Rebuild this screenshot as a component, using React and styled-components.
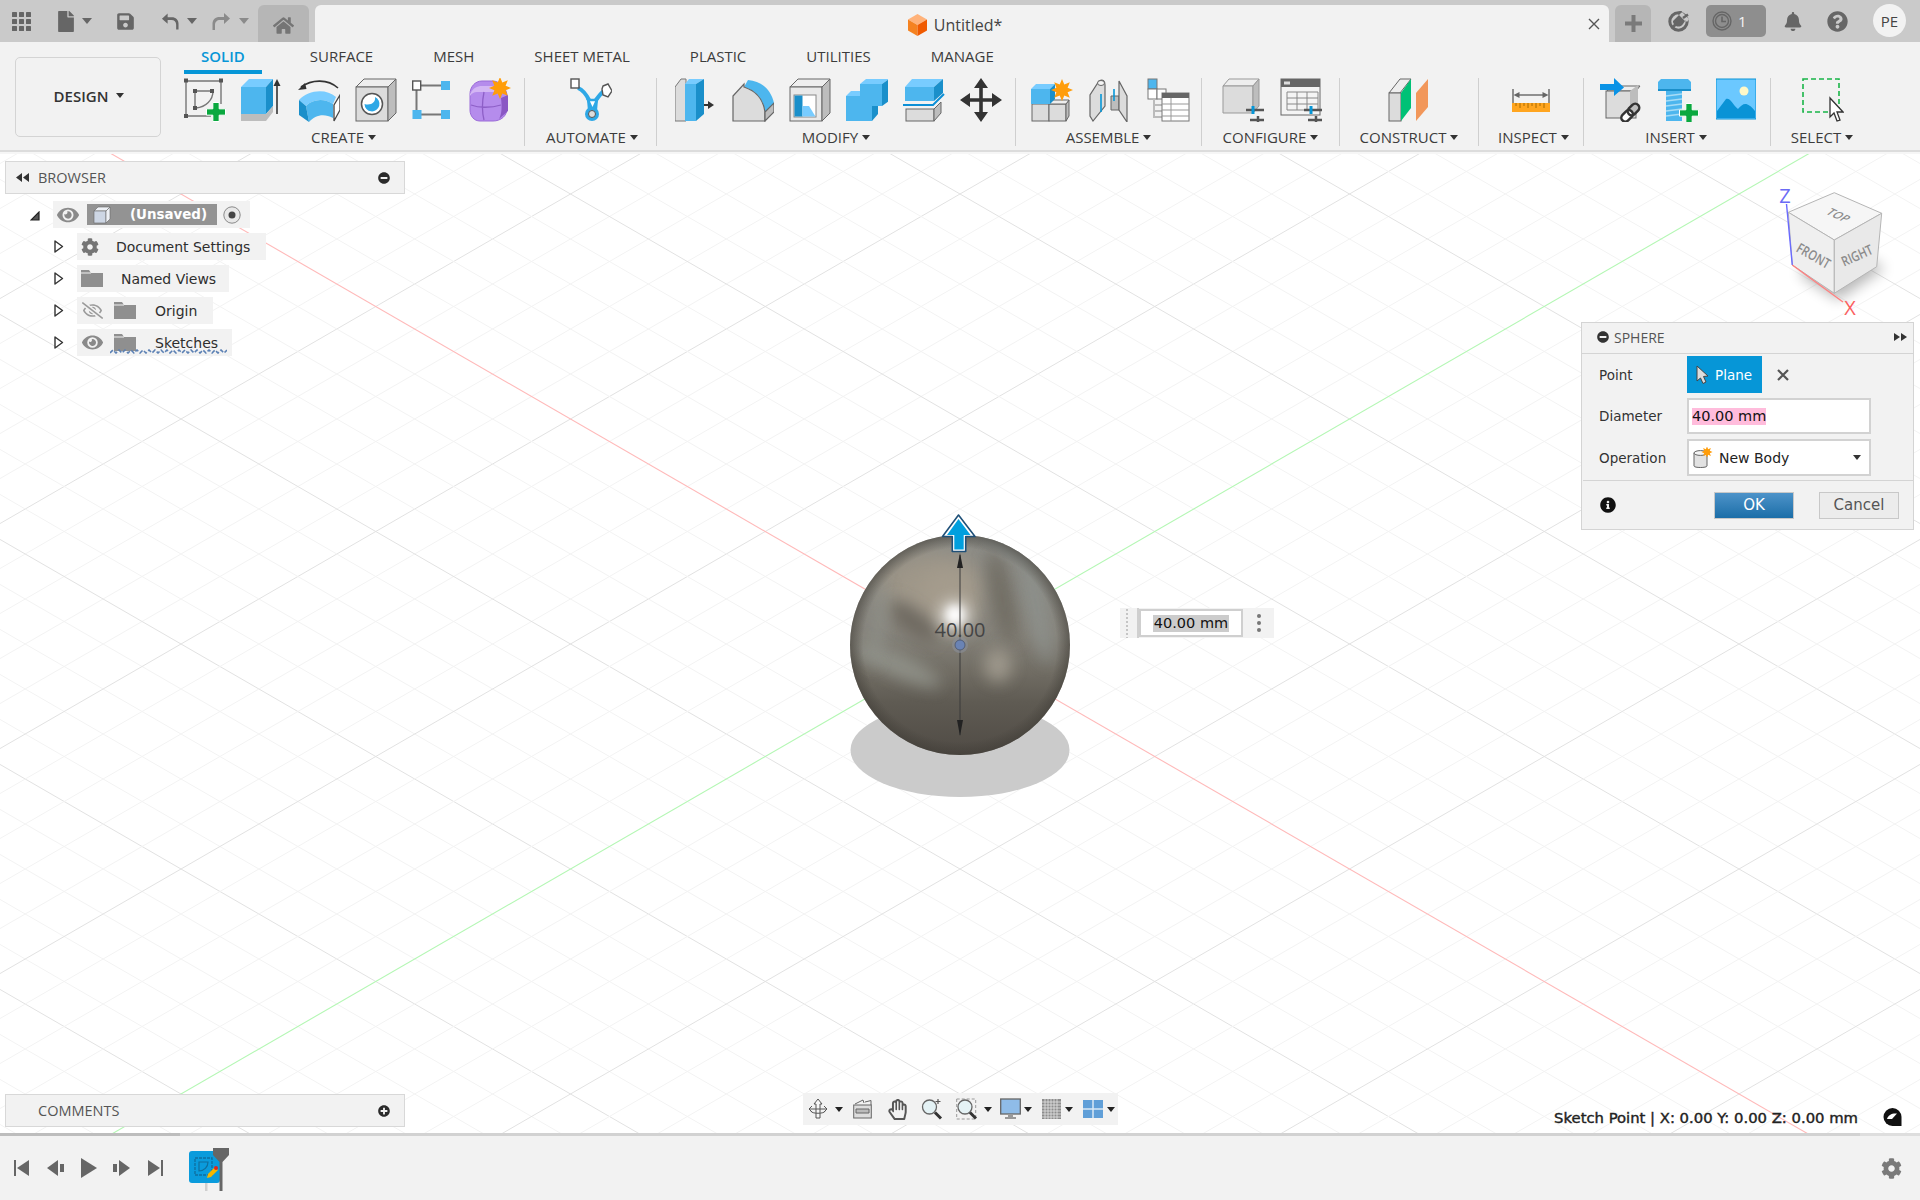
import React from "react";
import styled, { createGlobalStyle } from "styled-components";
import { FaBell, FaCog, FaEye, FaFile, FaHome, FaInfoCircle, FaMinusCircle, FaPlusCircle, FaQuestionCircle, FaRegEyeSlash, FaRegHandPaper, FaSave } from "react-icons/fa";

const Global = createGlobalStyle`
  html, body { margin: 0; padding: 0; background: #fff; }
  * { box-sizing: border-box; }
  body { font-family: "Open Sans", "Noto Sans", sans-serif; }
`;

const Page = styled.div`
  width: 1920px; height: 1200px; display: flex; flex-direction: column; overflow: hidden; color: #333;
`;

/* ---------- title bar ---------- */
const TitleBar = styled.header`
  height: 42px; flex: none; background: #cacaca; padding-top: 5px; display: flex; align-items: stretch; color: #666;
`;
const TopItem = styled.span`
  flex: none; margin-left: ${p => p.$ml || 0}px; width: ${p => p.$w}px; height: 32px; display: flex; align-items: center; justify-content: center; color: ${p => p.$c || "#666"};
`;
const Caret = styled.span`
  flex: none; display: inline-block; width: 0; height: 0;
  border-left: ${p => p.$s || 4}px solid transparent; border-right: ${p => p.$s || 4}px solid transparent;
  border-top: ${p => (p.$s || 4) * 1.25}px solid ${p => p.$c || "#444"};
  margin-left: ${p => p.$ml || 0}px;
`;
const HomeTab = styled.div`
  flex: none; margin-left: 9px; width: 51px; background: #b6b6b6; border-radius: 6px 6px 0 0; display: flex; align-items: center; justify-content: center; padding-top: 4px; color: #757575;
`;
const DocTab = styled.div`
  flex: none; margin-left: 6px; width: 1294px; background: #f2f2f2; border-radius: 6px 6px 0 0; display: flex; align-items: center; padding-right: 9px;
`;
const DocTitle = styled.div`
  flex: 1; display: flex; align-items: center; justify-content: center; gap: 7px; padding: 2px 0 0 7px; font-size: 16px; color: #444;
`;
const PlusTab = styled(HomeTab)`
  margin-left: 6px; width: 36px; padding-top: 0; color: #777;
`;
const ClockPill = styled.div`
  flex: none; margin-left: 17px; width: 60px; background: #8e8e8e; border-radius: 5px; height: 32px; display: flex; align-items: center; padding-left: 6px; gap: 6px; color: #f4f4f4; font-size: 15px;
`;
const Avatar = styled.div`
  flex: none; margin-left: 25px; margin-top: -1px; width: 33px; height: 33px; border-radius: 50%; background: #f2f2f2; display: flex; align-items: center; justify-content: center; font-size: 15px; color: #444;
`;

/* ---------- ribbon ---------- */
const Ribbon = styled.section`
  height: 110px; flex: none; background: #f2f2f2; border-bottom: 2px solid #dcdcdc; display: flex; align-items: flex-start;
`;
const DesignButton = styled.div`
  flex: none; margin: 15px 0 0 15px; width: 146px; height: 80px; padding: 0 0 3px 2px; border: 1.5px solid #d4d4d4; border-radius: 5px; display: flex; align-items: center; justify-content: center; gap: 8px; font-size: 15px; font-weight: 600; color: #333;
`;
const RibbonMain = styled.div`
  margin-left: 9px; display: flex; flex-direction: column;
`;
const Tabs = styled.nav`
  height: 36px; display: flex; gap: 26px; padding-left: 14px;
`;
const Tab = styled.div`
  height: 32px; padding: 5px 17px 0; font-size: 15px; line-height: 18px; white-space: nowrap; margin-right: ${p => (p.$active ? 5 : 0)}px;
  color: ${p => (p.$active ? "#0696d7" : "#3c3c3c")}; font-weight: ${p => (p.$active ? 600 : 400)};
  border-bottom: 4px solid ${p => (p.$active ? "#0696d7" : "transparent")};
`;
const Groups = styled.div`
  display: flex;
`;
const Group = styled.div`
  flex: none; width: ${p => p.$w}px; height: 68px; display: flex; flex-direction: column; align-items: center;
  border-right: ${p => (p.$last ? "none" : "1.5px solid #cfcfcf")};
`;
const ToolRow = styled.div`
  height: 44px; display: flex; gap: ${p => p.$gap ?? 15}px; padding-left: ${p => p.$pl || 0}px;
`;
const GroupLabel = styled.div`
  margin-top: 6px; height: 18px; line-height: 18px; display: flex; align-items: center; gap: 4px; font-size: 15px; color: #3c3c3c; white-space: nowrap; margin-right: ${p => p.$lo || 0}px;
`;
const ToolSvg = styled.svg`
  flex: none; display: block; width: ${p => p.$w || 42}px; height: 44px;
`;

const B = { front: "#4db6ee", dark: "#1a8fca", light: "#78ccff", line: "#666", g1: "#dcdcdc", g2: "#bdbdbd", g3: "#eeeeee" };
const Tool = ({ w = 42, children }) => <ToolSvg $w={w} viewBox={`0 0 ${w} 44`}>{children}</ToolSvg>;
const Plus = ({ x, y, s = 18 }) => (
  <g transform={`translate(${x} ${y})`}>
    <path d={`M${-s / 6} ${-s / 2}h${s / 3}v${s / 3}h${s / 3}v${s / 3}h${-s / 3}v${s / 3}h${-s / 3}v${-s / 3}h${-s / 3}v${-s / 3}h${s / 3}z`} fill="#0aa83f" stroke="#fff" strokeWidth="1" />
  </g>
);
const Star = ({ x, y, r = 10 }) => {
  const pts = [];
  for (let i = 0; i < 16; i++) {
    const a = (i * Math.PI) / 8 - Math.PI / 2;
    const R = i % 2 ? r * 0.55 : r;
    pts.push(`${(x + R * Math.cos(a)).toFixed(1)},${(y + R * Math.sin(a)).toFixed(1)}`);
  }
  return <polygon points={pts.join(" ")} fill="#ff9d0a" />;
};
const Sliders = ({ x, y }) => (
  <g transform={`translate(${x} ${y})`} stroke="#555" strokeWidth="2.5">
    <path d="M0 3h18M4 13h14" />
    <path d="M7 -1v8" stroke="#0696d7" strokeWidth="3" />
    <path d="M12 9v8" />
  </g>
);

const SketchIcon = () => (
  <Tool>
    <g stroke="#777" strokeWidth="1.4" fill="none">
      <path d="M3 3h33M2 4v33M3 38h24M37 4v22" />
      <path d="M12 13h16M11 13v17" />
      <path d="M29 13c0 9-7 16-17 17" />
    </g>
    <g fill="#555">
      <rect x="0" y="0.5" width="4" height="4" /><rect x="35" y="0.5" width="4" height="4" /><rect x="0" y="36" width="4" height="4" />
      <rect x="9" y="11" width="4" height="4" /><rect x="26" y="11" width="4" height="4" /><rect x="9" y="28" width="4" height="4" />
    </g>
    <Plus x={32} y={34} s={19} />
  </Tool>
);
const ExtrudeIcon = () => (
  <Tool>
    <path d="M0 9L8 1H32L25 9Z" fill={B.light} />
    <rect x="0" y="9" width="25" height="27" fill={B.front} />
    <path d="M25 9L32 1V28L25 36Z" fill={B.dark} />
    <path d="M0 36H25L32 28V34L25 43H0Z" fill={B.g2} />
    <path d="M36 36V5" stroke="#333" strokeWidth="1.6" />
    <path d="M36 1l3.5 7h-7z" fill="#333" />
  </Tool>
);
const RevolveIcon = () => (
  <Tool>
    <path d="M40 10C30 1 14 1 3 9" fill="none" stroke="#333" strokeWidth="1.6" />
    <path d="M0 12l7-7 1.5 6z" fill="#333" />
    <path d="M1 22C10 12 28 10 38 19L35 26C26 20 15 21 8 28Z" fill={B.light} />
    <path d="M8 28C15 21 26 20 35 26L35 40C26 35 17 37 11 44Z" fill={B.front} />
    <path d="M1 22L8 28L11 44L1 37Z" fill={B.dark} />
    <path d="M36 27L42 17V32L36 43Z" fill="#fff" stroke="#444" strokeWidth="1.3" />
  </Tool>
);
const HoleIcon = () => (
  <Tool>
    <path d="M1 9L9 1H41L33 9Z" fill={B.g3} stroke={B.line} />
    <rect x="1" y="9" width="32" height="34" fill={B.g1} stroke={B.line} />
    <path d="M33 9L41 1V35L33 43Z" fill={B.g2} stroke={B.line} />
    <circle cx="17" cy="26" r="10.5" fill="#fff" stroke="#555" strokeWidth="1.5" />
    <path d="M9.5 26A7.5 7.5 0 1 0 20 19C21 24 16 28 9.5 26Z" fill="#2ea8e6" />
  </Tool>
);
const PatternIcon = () => (
  <Tool w={42}>
    <path d="M9 7.5h20M4.5 12v20M9 36.5h20" stroke="#777" strokeWidth="2" />
    <rect x="0.7" y="3" width="8" height="9" fill="#fff" stroke="#555" strokeWidth="1.4" />
    <rect x="29" y="3" width="9" height="9" fill={B.front} />
    <rect x="0.5" y="32" width="9" height="9" fill={B.front} />
    <rect x="29" y="32" width="9" height="9" fill={B.front} />
  </Tool>
);
const FormIcon = () => (
  <Tool>
    <path d="M1 16C1 9 6 3 13 3H24C30 3 38 10 38 18V30C38 38 32 43 24 43H11C5 43 1 38 1 32Z" fill="#b58cec" stroke="#9a6ad8" />
    <path d="M1 16C4 10 8 8 13 8H24L30 14H8C5 14 3 15 1 18Z" fill="#d3b6f4" />
    <path d="M32 20L39 17V33L30 41C33 36 33 28 32 20Z" fill="#8a58c4" />
    <path d="M2 27C10 30 22 30 32 27M15 14C13 24 13 34 15 42" fill="none" stroke="#8d5fc7" strokeWidth="1.3" />
    <Star x={31} y={10} r={11} />
  </Tool>
);
const AutomateIcon = () => (
  <Tool>
    <path d="M8 10C13 12 16 16 19 22L20 33H25L26 22C29 18 31 15 34 13" fill="none" stroke="#2ea8e6" strokeWidth="4" />
    <path d="M18 22H27L22.5 32Z" fill="#fff" stroke="#2ea8e6" strokeWidth="2.5" />
    <rect x="1" y="1" width="8" height="9" fill="#fff" stroke="#555" strokeWidth="1.4" />
    <path d="M33 8L38 6L42 13L38 19L33 17L32 11Z" fill="#fff" stroke="#555" strokeWidth="1.4" />
    <circle cx="22" cy="36" r="7" fill="#2ea8e6" />
    <circle cx="22" cy="36" r="3.5" fill="#ddd" stroke="#555" />
  </Tool>
);
const PressPullIcon = () => (
  <Tool>
    <path d="M0 9L6 1H11V43H0Z" fill={B.g1} stroke="#777" />
    <path d="M10 6L14 1H29L21 6Z" fill={B.light} />
    <rect x="10" y="6" width="11" height="37" fill={B.front} />
    <path d="M21 6L29 1V36L21 43Z" fill={B.dark} />
    <path d="M29 27H35" stroke="#333" strokeWidth="2" />
    <path d="M39 27l-6-4v8z" fill="#333" />
  </Tool>
);
const FilletIcon = () => (
  <Tool>
    <path d="M16 2C30 3 39 12 42 25L33 34C30 20 24 13 12 9Z" fill={B.front} />
    <path d="M1 18L12 6V9C24 13 31 20 33 34V43H1Z" fill={B.g1} stroke={B.line} strokeWidth="1.2" />
    <path d="M33 34L42 25V34L33 43Z" fill={B.g2} stroke={B.line} strokeWidth="1.2" />
  </Tool>
);
const ShellIcon = () => (
  <Tool>
    <path d="M1 9L9 1H41L33 9Z" fill={B.g3} stroke={B.line} />
    <rect x="1" y="9" width="32" height="34" fill="#e9e9e9" stroke={B.line} />
    <path d="M33 9L41 1V35L33 43Z" fill={B.g2} stroke={B.line} />
    <rect x="5" y="17" width="22" height="22" fill="#fff" stroke="#888" />
    <rect x="5.5" y="17.5" width="8" height="21" fill={B.dark} />
    <path d="M13.5 28H20L26.5 38.5H13.5Z" fill={B.light} />
  </Tool>
);
const CombineIcon = () => (
  <Tool>
    <path d="M0 18L5 13H14V18Z" fill={B.light} />
    <path d="M14 6L20 1H43L36 6Z" fill={B.light} />
    <path d="M0 18H14V6H36V28H26V43H0Z" fill={B.front} />
    <path d="M36 6L43 1V23L36 28Z" fill={B.dark} />
    <path d="M26 28H32V36L26 43Z" fill={B.dark} />
  </Tool>
);
const SplitIcon = () => (
  <Tool>
    <path d="M2 9L9 1H40L31 9Z" fill={B.light} />
    <rect x="2" y="9" width="29" height="14" fill={B.front} />
    <path d="M31 9L40 1V15L31 23Z" fill={B.dark} />
    <path d="M0 27H30L41 16" fill="none" stroke="#0c8fd6" strokeWidth="2" />
    <rect x="3" y="31" width="28" height="12" fill={B.g1} stroke={B.line} />
    <path d="M31 31L38 24V35L31 43Z" fill={B.g2} stroke={B.line} />
  </Tool>
);
const MoveIcon = () => (
  <Tool>
    <path d="M21 6V38M5 22H37" stroke="#333" strokeWidth="3.6" />
    <path d="M21 0l7 10H14zM21 44l7-10H14zM0 22l10-7v14zM42 22l-10-7v14z" fill="#333" />
  </Tool>
);
const JointIcon = () => (
  <Tool>
    <rect x="1" y="26" width="17" height="17" fill={B.g1} stroke={B.line} />
    <rect x="18" y="26" width="17" height="17" fill={B.g1} stroke={B.line} />
    <path d="M35 26L38 22V38L35 43Z" fill={B.g2} stroke={B.line} />
    <path d="M18 26L22 22H38L35 26Z" fill={B.g3} stroke={B.line} />
    <path d="M0 11L5 6H24L19 11Z" fill={B.light} />
    <rect x="0" y="11" width="19" height="15" fill={B.front} />
    <path d="M19 11L24 6V21L19 26Z" fill={B.dark} />
    <Star x={31} y={12} r={11} />
  </Tool>
);
const RigidIcon = () => (
  <Tool w={42}>
    <path d="M1 38V17L10 3C14 1 16 3 16 7V28L4 43Z" fill={B.g1} stroke={B.line} strokeWidth="1.2" />
    <ellipse cx="12" cy="5" rx="3.5" ry="2.5" fill="#f4f4f4" stroke={B.line} />
    <path d="M12 16V34" stroke="#0696d7" strokeWidth="1.6" />
    <path d="M22 18H30V32H22Z" fill={B.g2} stroke={B.line} />
    <path d="M30 3L38 18V44L30 32Z" fill={B.g1} stroke={B.line} strokeWidth="1.2" />
    <path d="M25 11V23" stroke="#0696d7" strokeWidth="1.6" />
  </Tool>
);
const TableTreeIcon = () => (
  <Tool w={43}>
    <rect x="1" y="1" width="9" height="10" fill={B.front} stroke="#777" />
    <rect x="1" y="11" width="9" height="10" fill="#fff" stroke="#777" />
    <rect x="10" y="11" width="9" height="10" fill="#fff" stroke="#777" />
    <path d="M7 21V40M7 27H15M7 33H15M7 39H15" stroke="#bbb" strokeWidth="2" />
    <rect x="15" y="15" width="27" height="28" fill="#fff" stroke="#777" />
    <rect x="15" y="15" width="27" height="5" fill="#666" />
    <path d="M24 20V43M15 26H42M15 32H42M15 38H42" stroke="#999" />
  </Tool>
);
const ConfigIcon = () => (
  <Tool>
    <path d="M1 8L7 1H37L31 8Z" fill={B.g3} stroke="#999" />
    <path d="M1 8H31V35H1Z" fill={B.g1} stroke="#999" />
    <path d="M31 8L37 1V28L31 35Z" fill={B.g2} stroke="#999" />
    <Sliders x={24} y={29} />
  </Tool>
);
const ConfigTableIcon = () => (
  <Tool>
    <rect x="1" y="1" width="39" height="36" fill="#f4f4f4" stroke="#666" />
    <rect x="1" y="1" width="39" height="8" fill="#666" />
    <rect x="4" y="3.5" width="6" height="3" fill="#ddd" />
    <path d="M7 14h31v18H7zM17 14v18M27 14v18M7 20h31M7 26h31" fill="none" stroke="#888" />
    <Sliders x={24} y={29} />
  </Tool>
);
const ConstructIcon = () => (
  <Tool>
    <path d="M1 15L12 1H23L12 15Z" fill={B.g3} stroke="#666" />
    <rect x="1" y="15" width="12" height="28" fill={B.g1} stroke="#666" />
    <path d="M13 43V15L23 1V30Z" fill="#00c176" />
    <path d="M28 43V15L40 1V29Z" fill="#f2975a" />
  </Tool>
);
const InspectIcon = () => (
  <Tool w={38}>
    <path d="M1 11V27M37 11V27" stroke="#666" strokeWidth="1.4" />
    <path d="M6 17H32" stroke="#666" strokeWidth="1.4" />
    <path d="M1.5 17l6-3v6zM36.5 17l-6-3v6z" fill="#666" />
    <rect x="0" y="25" width="38" height="9" fill="#ffa51f" />
    <path d="M4 25v3M8 25v5M12 25v3M16 25v5M20 25v3M24 25v5M28 25v3M32 25v5" stroke="#a86a00" />
  </Tool>
);
const DeriveIcon = () => (
  <Tool>
    <path d="M7 13L11 8H40L36 13Z" fill={B.g3} stroke="#666" />
    <rect x="6" y="13" width="30" height="27" fill={B.g1} stroke="#666" />
    <path d="M30 13L38 7V34L30 40Z" fill={B.g2} />
    <path d="M0 6H14V0L24 9.5L14 18V12H0Z" fill="#0a93e6" />
    <g fill="none" stroke="#333" strokeWidth="2.5" transform="rotate(-45 31 34)">
      <rect x="19" y="30" width="13" height="8" rx="4" fill="#fff" />
      <rect x="28" y="30" width="13" height="8" rx="4" />
    </g>
  </Tool>
);
const BoltIcon = () => (
  <Tool w={42}>
    <path d="M0 4L3 1H30L33 4V13H0Z" fill={B.front} />
    <rect x="0" y="11" width="33" height="2" fill={B.dark} />
    <rect x="8" y="13" width="16" height="30" fill={B.front} />
    <path d="M8 18l16-2M8 23l16-2M8 28l16-2M8 33l16-2M8 38l16-2" stroke="#a7dcf6" strokeWidth="1.4" />
    <Plus x={31} y={35} s={19} />
  </Tool>
);
const ImageIcon = () => (
  <Tool w={40}>
    <rect x="0" y="1" width="40" height="40" fill="#6bc8ff" stroke="#0a93d6" />
    <circle cx="28" cy="13" r="4.5" fill="#fff8c8" />
    <path d="M1 33L10 21C14 19 17 27 22 31C27 25 31 23 39 33V40H1Z" fill="#0a93d6" />
  </Tool>
);
const SelectIcon = () => (
  <Tool>
    <rect x="1" y="1" width="36" height="33" fill="none" stroke="#19b548" strokeWidth="1.6" strokeDasharray="5 3" />
    <path d="M28 20V39L32 35L35 43L38 42L35 34L41 34Z" fill="#fff" stroke="#333" strokeWidth="1.3" />
  </Tool>
);

const groups = [
  { w: 355, label: "CREATE", lo: 7, tools: [SketchIcon, ExtrudeIcon, RevolveIcon, HoleIcon, PatternIcon, FormIcon] },
  { w: 132, label: "AUTOMATE", lo: -3, tools: [AutomateIcon] },
  { w: 359, label: "MODIFY", pl: 4, tools: [PressPullIcon, FilletIcon, ShellIcon, CombineIcon, SplitIcon, MoveIcon] },
  { w: 186, label: "ASSEMBLE", pl: 4, gap: 16, tools: [JointIcon, RigidIcon, TableTreeIcon] },
  { w: 138, label: "CONFIGURE", pl: 3, gap: 16, tools: [ConfigIcon, ConfigTableIcon] },
  { w: 139, label: "CONSTRUCT", tools: [ConstructIcon] },
  { w: 105, label: "INSPECT", lo: -5, tools: [InspectIcon] },
  { w: 187, label: "INSERT", lo: 2, pl: 1, gap: 16, tools: [DeriveIcon, BoltIcon, ImageIcon] },
  { w: 102, label: "SELECT", pl: 1, last: true, tools: [SelectIcon] },
];
const tabs = ["SOLID", "SURFACE", "MESH", "SHEET METAL", "PLASTIC", "UTILITIES", "MANAGE"];

/* ---------- canvas ---------- */
const Canvas = styled.main`
  flex: 1; position: relative; background: #fff; overflow: hidden;
  &::before { content: ""; position: absolute; z-index: 1; left: 0; right: 0; top: 0; height: 2px; background: #f6f6f6; }
`;
const SceneSvg = styled.svg`
  position: absolute; left: 0; top: 0; width: 1920px; height: 981px; display: block;
`;

const EX = 38.95, EY = 22.5, OX = 960, OY = 644, LEN = 2600;
const gridLines = [];
for (let k = -40; k <= 40; k++) {
  const major = k % 5 === 0;
  const stroke = major ? "#e2e2e2" : "#f3f3f3";
  [0, 1].forEach(dir => {
    if (k === 0) return;
    const px = OX + k * EX, py = OY + (dir === 0 ? -1 : 1) * k * EY;
    const dx = LEN, dy = (dir === 0 ? 1 : -1) * LEN * (EY / EX);
    gridLines.push(<line key={`${dir}-${k}`} x1={px - dx} y1={py - dy} x2={px + dx} y2={py + dy} stroke={stroke} strokeWidth="1" />);
  });
}
const axis = (sign, color) => {
  const dy = sign * LEN * (EY / EX);
  return <line x1={OX - LEN} y1={OY - dy} x2={OX + LEN} y2={OY + dy} stroke={color} strokeWidth="1.1" />;
};

const Scene = () => (
  <SceneSvg viewBox="0 152 1920 981">
    <defs>
      <linearGradient id="ballBase" x1="0" y1="0" x2="0" y2="1">
        <stop offset="0" stopColor="#8c8c87" />
        <stop offset="0.45" stopColor="#85827a" />
        <stop offset="0.62" stopColor="#716d64" />
        <stop offset="0.76" stopColor="#5f5b53" />
        <stop offset="1" stopColor="#504b45" />
      </linearGradient>
      <radialGradient id="ballRim" cx="0.5" cy="0.5" r="0.5">
        <stop offset="0.88" stopColor="#3f3c36" stopOpacity="0" />
        <stop offset="1" stopColor="#3f3c36" stopOpacity="0.55" />
      </radialGradient>
      <clipPath id="ballClip"><circle cx="960" cy="645" r="110" /></clipPath>
      <filter id="b4" x="-60%" y="-60%" width="220%" height="220%"><feGaussianBlur stdDeviation="4" /></filter>
      <filter id="b7" x="-80%" y="-80%" width="260%" height="260%"><feGaussianBlur stdDeviation="8" /></filter>
      <filter id="b12" x="-60%" y="-60%" width="220%" height="220%"><feGaussianBlur stdDeviation="12" /></filter>
      <filter id="cubeShadow" x="-40%" y="-40%" width="180%" height="180%"><feGaussianBlur stdDeviation="7" /></filter>
    </defs>
    {gridLines}
    {axis(1, "#ffb9b9")}
    {axis(-1, "#b4f7b4")}
    <ellipse cx="960" cy="750" rx="109.5" ry="47" fill="#cbcbcb" />
    <circle cx="960" cy="645" r="110" fill="url(#ballBase)" />
    <g clipPath="url(#ballClip)">
      <ellipse cx="928" cy="585" rx="50" ry="32" fill="#9e9688" filter="url(#b12)" />
      <ellipse cx="950" cy="597" rx="30" ry="32" fill="#a59c8d" filter="url(#b12)" />
      <ellipse cx="913" cy="622" rx="30" ry="11" fill="#6d685e" transform="rotate(38 913 622)" filter="url(#b7)" />
      <ellipse cx="1002" cy="598" rx="11" ry="48" fill="#6d695f" opacity="0.85" transform="rotate(-12 1002 598)" filter="url(#b7)" />
      <ellipse cx="1036" cy="605" rx="10" ry="60" fill="#8e928d" opacity="0.9" transform="rotate(-12 1036 605)" filter="url(#b7)" />
      <ellipse cx="1000" cy="545" rx="38" ry="6" fill="#8f938f" transform="rotate(30 1000 545)" filter="url(#b4)" />
      <ellipse cx="897" cy="665" rx="48" ry="11" fill="#93948c" opacity="0.9" transform="rotate(24 897 665)" filter="url(#b7)" />
      <ellipse cx="878" cy="625" rx="7" ry="42" fill="#90928b" opacity="0.8" transform="rotate(8 878 625)" filter="url(#b7)" />
      <ellipse cx="998" cy="665" rx="14" ry="17" fill="#a29c90" opacity="0.9" filter="url(#b7)" />
      <ellipse cx="955" cy="616" rx="15" ry="15" fill="#fff" opacity="0.7" filter="url(#b7)" />
      <ellipse cx="955" cy="615" rx="8" ry="9" fill="#fff" filter="url(#b4)" />
    </g>
    <circle cx="960" cy="645" r="110" fill="url(#ballRim)" />
    <path d="M960 555V735" stroke="#3a3a3a" strokeWidth="1" />
    <path d="M960 553L963 568H957ZM960 736L963 720H957Z" fill="#222" />
    <text x="960" y="637" textAnchor="middle" fontFamily="'Open Sans', sans-serif" fontSize="20" fill="#444">40.00</text>
    <circle cx="960" cy="645" r="8" fill="#8a8f9a" opacity="0.6" />
    <circle cx="960" cy="645" r="5" fill="#6a83b4" stroke="#39435a" strokeWidth="0.6" />
    <path d="M958.5 515L975 536.5H965.7V551.5H952.3V536.5H942.5Z" fill="#fff" stroke="#1f5078" strokeWidth="1.6" strokeLinejoin="round" />
    <path d="M958.5 519L970.5 535H963.7V549.5H954.3V535H947Z" fill="#009fde" />

    <polygon points="1800,275 1838,300 1885,268 1860,255 1810,255" fill="#000" opacity="0.28" filter="url(#cubeShadow)" />
    <polygon points="1834.3,192.7 1881.7,213.3 1834.3,240 1788.3,212.3" fill="#f6f6f6" stroke="#b5b5b5" />
    <polygon points="1788.3,212.3 1834.3,240 1834.3,293.3 1792.3,265" fill="#efefef" stroke="#b5b5b5" />
    <polygon points="1834.3,240 1881.7,213.3 1876.7,266.7 1834.3,293.3" fill="#e9e9e9" stroke="#b5b5b5" />
    <path d="M1786.5 204L1792.3 265" stroke="#6a6aff" strokeWidth="1.4" />
    <path d="M1792.3 265L1843 302" stroke="#ff8080" strokeWidth="1.4" />
    <text x="1785" y="203" textAnchor="middle" fontFamily="'Open Sans', sans-serif" fontSize="20" fill="#6b6bf5">Z</text>
    <text x="1850" y="315" textAnchor="middle" fontFamily="'Open Sans', sans-serif" fontSize="20" fill="#fb5f5f">X</text>
    <g fontFamily="'Open Sans', sans-serif" fontWeight="600" fill="#8c8c8c" textAnchor="middle">
      <text transform="translate(1835 218) rotate(24) skewX(-28)" fontSize="11">TOP</text>
      <text transform="translate(1811 260) rotate(30) scale(0.92 1.15)" fontSize="12">FRONT</text>
      <text transform="translate(1859 260) rotate(-24) scale(0.92 1.15)" fontSize="12">RIGHT</text>
    </g>
  </SceneSvg>
);

const FloatPanelBar = styled.div`
  position: absolute; left: 5px; top: ${p => p.$top}px; width: 400px; height: ${p => p.$h}px; background: #f2f2f2; border: 1.5px solid #d8d8d8;
  display: flex; align-items: center; padding: 0 14px 0 10px; font-size: 14.5px; color: #555;
`;
const PanelTitle = styled.span`
  margin-left: ${p => p.$ml}px; flex: 1;
`;
const Tree = styled.div`
  position: absolute; left: 30px; top: 49px; display: flex; flex-direction: column; gap: 5px;
`;
const TreeRow = styled.div`
  display: flex; align-items: center; height: 27px; padding-left: ${p => p.$indent || 0}px;
`;
const Chip = styled.div`
  height: 27px; background: #f2f2f2; display: flex; align-items: center; padding: 0 ${p => p.$pr ?? 14}px 0 ${p => p.$pl ?? 4}px; margin-left: ${p => p.$ml || 0}px;
  font-family: "DejaVu Sans", sans-serif; font-size: 14px; color: #2e2e2e; position: relative;
`;
const ChipText = styled.span`
  margin-left: ${p => p.$ml}px; white-space: nowrap;
`;
const Squiggle = styled.svg`
  position: absolute; left: 33px; top: 20px; width: 117px; height: 5px;
`;
const SelectedRoot = styled.div`
  width: 130px; height: 21px; margin-left: 8px; background: #939393; display: flex; align-items: center; padding-left: 6px; color: #fff; font-weight: 700; font-size: 13.4px;
`;

const Eye = () => <FaEye size={22} color="#8a8a8a" />;
const FolderIcon = () => (
  <svg width="22" height="17" viewBox="0 0 22 17" style={{ display: "block", flex: "none" }}>
    <path d="M0 0H8L10 3H22V17H0Z" fill="#8f8f8f" />
    <path d="M0 3H10" stroke="#f2f2f2" />
  </svg>
);
const Toggle = () => (
  <svg width="10" height="13" viewBox="0 0 10 13" style={{ display: "block", flex: "none" }}>
    <path d="M1 1L8.5 6.5L1 12Z" fill="#fff" stroke="#333" strokeWidth="1.4" strokeLinejoin="round" />
  </svg>
);

const Dialog = styled.aside`
  position: absolute; left: 1581px; top: 170px; width: 333px; height: 208px; background: #f2f2f2; border: 1.5px solid #d4d4d4; display: flex; flex-direction: column;
  font-family: "DejaVu Sans", sans-serif; font-size: 13.5px; color: #333;
`;
const DialogHeader = styled.div`
  height: 31px; flex: none; display: flex; align-items: center; padding: 0 6px 2px 15px; gap: 5px; border-bottom: 1.5px solid #d4d4d4; font-family: "Open Sans", sans-serif; font-size: 14px; color: #555;
`;
const DialogBody = styled.div`
  height: 127px; flex: none; display: grid; grid-template-columns: 88px 1fr; align-items: center; padding: 2px 40px 3px 16px; row-gap: 5px; border-bottom: 1.5px solid #d4d4d4; align-content: start; margin-left: 1px;
`;
const PlaneRow = styled.div`
  display: flex; align-items: center; gap: 15px;
`;
const PlaneButton = styled.div`
  width: 75px; height: 37px; background: #0696d7; color: #fff; display: flex; align-items: center; gap: 7px; padding-left: 9px;
`;
const ValueField = styled.div`
  width: 184px; height: 36px; background: #fff; border: 2px solid #d2d2d2; display: flex; align-items: center; padding-left: 3px; color: #111; font-size: 14.5px;
`;
const Marked = styled.span`
  background: ${p => p.$c}; line-height: 17px; padding: 0 ${p => p.$pad || 0}px;
`;
const SelectField = styled(ValueField)`
  height: 37px; padding: 0 8px 0 4px; gap: 6px; justify-content: flex-start; color: #222; font-size: 14px;
`;
const DialogFooter = styled.div`
  flex: 1; display: flex; align-items: center; padding: 0 14px 0 18px;
`;
const PrimaryButton = styled.div`
  margin-left: auto; width: 80px; height: 27px; background: linear-gradient(#4d93c9, #1c6ea8); border: 1.5px solid #c8c8c8; color: #fff; display: flex; align-items: center; justify-content: center; font-size: 15px;
`;
const CancelButton = styled.div`
  margin-left: 25px; width: 80px; height: 27px; background: #ececec; border: 1.5px solid #c8c8c8; display: flex; align-items: center; justify-content: center; color: #555; font-size: 15px;
`;

const DimBox = styled.div`
  position: absolute; left: 1120px; top: 456px; width: 154px; height: 30px; background: #f2f2f2; display: flex; align-items: center; font-family: "DejaVu Sans", sans-serif; font-size: 14.5px; color: #111;
`;
const Grip = styled.div`
  width: 19px; height: 100%; flex: none; border-right: 2px solid #d0d0d0; background: radial-gradient(#c5c5c5 0.8px, transparent 1px) 5px 0 / 4px 4px repeat-y;
`;
const DimInput = styled.div`
  width: 104px; height: 28px; background: #fff; border: 2px solid #cfcfcf; display: flex; align-items: center; justify-content: center; flex: none;
`;
const KebabDots = styled.div`
  flex: 1; display: flex; flex-direction: column; align-items: center; gap: 3px;
`;
const Dot = styled.i`
  width: 4px; height: 4px; border-radius: 50%; background: #777; display: block;
`;

const NavBar = styled.div`
  position: absolute; left: 803px; bottom: 8px; width: 315px; height: 32px; background: #f2f2f2; display: flex; align-items: center;
`;
const NavItem = styled.span`
  flex: none; margin-left: ${p => p.$ml}px; display: flex; align-items: center;
`;
const NavSvg = styled.svg`
  display: block; width: ${p => p.$w}px; height: 22px;
`;
const StatusRow = styled.div`
  position: absolute; right: 18px; bottom: 7px; display: flex; align-items: center; gap: 25px;
`;
const StatusText = styled.div`
  font-family: "DejaVu Sans", sans-serif; font-size: 14.8px; color: #222; white-space: nowrap; -webkit-text-stroke: 0.4px #222;
`;

/* ---------- timeline ---------- */
const Timeline = styled.footer`
  height: 67px; flex: none; background: #f2f2f2; display: flex; flex-direction: column;
`;
const TimelineRule = styled.div`
  height: 3px; background: linear-gradient(90deg, #bdbdbd 0 180px, #d2d2d2 180px 1860px, #dedede 1860px);
`;
const Transport = styled.div`
  flex: 1; display: flex; align-items: center; padding: 0 18px 0 14px;
`;
const TransportBtn = styled.svg`
  display: block; flex: none; width: ${p => p.$w}px; height: 20px; margin-left: ${p => p.$ml || 0}px;
`;
const FeatureTile = styled.svg`
  display: block; flex: none; margin-left: 26px; margin-top: 6px; width: 42px; height: 46px;
`;
const GearWrap = styled.div`
  margin-left: auto; color: #7a7a7a; display: flex;
`;

export default function App() {
  return (
    <Page>
      <Global />
      <TitleBar>
        <TopItem $ml={12} $w={19}>
          <svg width="19" height="19" viewBox="0 0 19 19" fill="#666">
            {[0, 7, 14].flatMap(x => [0, 7, 14].map(y => <rect key={`${x}${y}`} x={x} y={y} width="5" height="5" rx="0.6" />))}
          </svg>
        </TopItem>
        <TopItem $ml={26} $w={18}><FaFile size={21} /></TopItem>
        <TopItem $ml={7} $w={10}><Caret $s={5} $c="#666" /></TopItem>
        <TopItem $ml={24} $w={19}><FaSave size={19} /></TopItem>
        <TopItem $ml={26} $w={18}>
          <svg width="19" height="18" viewBox="0 0 19 18"><path d="M7 1L1 6.5L7 12V8H11C14 8 16 10 16 13V18H18.5V12C18.5 7.5 15.5 5 11.5 5H7Z" fill="#666" /></svg>
        </TopItem>
        <TopItem $ml={8} $w={10}><Caret $s={5} $c="#666" /></TopItem>
        <TopItem $ml={15} $w={19} $c="#8b8b8b">
          <svg width="19" height="18" viewBox="0 0 19 18"><path d="M12 1L18 6.5L12 12V8H8C5 8 3 10 3 13V18H.5V12C.5 7.5 3.5 5 7.5 5H12Z" fill="#8b8b8b" /></svg>
        </TopItem>
        <TopItem $ml={8} $w={10}><Caret $s={5} $c="#8b8b8b" /></TopItem>
        <HomeTab><FaHome size={21} /></HomeTab>
        <DocTab>
          <DocTitle>
            <svg width="19" height="22" viewBox="0 0 19 22">
              <path d="M9.5 0L19 5.5L9.5 11L0 5.5Z" fill="#ffb27a" />
              <path d="M0 5.5L9.5 11V22L0 16.5Z" fill="#f58220" />
              <path d="M19 5.5L9.5 11V22L19 16.5Z" fill="#f05a00" />
            </svg>
            Untitled*
          </DocTitle>
          <svg width="12" height="12" viewBox="0 0 12 12"><path d="M1 1L11 11M11 1L1 11" stroke="#555" strokeWidth="1.4" /></svg>
        </DocTab>
        <PlusTab>
          <svg width="17" height="17" viewBox="0 0 17 17"><path d="M8.5 0V17M0 8.5H17" stroke="#7a7a7a" strokeWidth="4" /></svg>
        </PlusTab>
        <TopItem $ml={17} $w={21}>
          <svg width="21" height="21" viewBox="0 0 21 21">
            <circle cx="10.5" cy="10.5" r="8.7" fill="none" stroke="#666" strokeWidth="3" />
            <path d="M13 0L21 8L19 11L10 2Z" fill="#cacaca" />
            <path d="M5 10L11 4L17 10L15 13C13 16 10 16 8 15L5.5 17.5L3.5 15.5L6 13C5 12 5 11 5 10Z" fill="#666" />
            <path d="M10 3L13.5 0M15 7L20 3.5" stroke="#666" strokeWidth="2.4" />
          </svg>
        </TopItem>
        <ClockPill>
          <svg width="20" height="20" viewBox="0 0 20 20" fill="none" stroke="#666">
            <circle cx="10" cy="10" r="9" strokeWidth="1.4" />
            <circle cx="10" cy="10" r="6.5" strokeWidth="1.4" />
            <path d="M10 5.5V10.5H14" strokeWidth="1.6" />
          </svg>
          1
        </ClockPill>
        <TopItem $ml={18} $w={18}><FaBell size={19} /></TopItem>
        <TopItem $ml={25} $w={21}><FaQuestionCircle size={21} /></TopItem>
        <Avatar>PE</Avatar>
      </TitleBar>

      <Ribbon>
        <DesignButton>DESIGN <Caret $c="#333" /></DesignButton>
        <RibbonMain>
          <Tabs>{tabs.map((t, i) => <Tab key={t} $active={i === 0}>{t}</Tab>)}</Tabs>
          <Groups>
            {groups.map(g => (
              <Group key={g.label} $w={g.w} $last={g.last}>
                <ToolRow $gap={g.gap} $pl={g.pl}>{g.tools.map((T, i) => <T key={i} />)}</ToolRow>
                <GroupLabel $lo={g.lo}>{g.label}<Caret $s={4} $c="#333" /></GroupLabel>
              </Group>
            ))}
          </Groups>
        </RibbonMain>
      </Ribbon>

      <Canvas>
        <Scene />
        <FloatPanelBar $top={9} $h={33}>
          <svg width="14" height="9" viewBox="0 0 14 9"><path d="M6 0V9L0 4.5ZM13 0V9L7 4.5Z" fill="#333" /></svg>
          <PanelTitle $ml={8}>BROWSER</PanelTitle>
          <FaMinusCircle size={12} color="#2b2b2b" />
        </FloatPanelBar>
        <Tree>
          <TreeRow>
            <svg width="10" height="10" viewBox="0 0 10 10" style={{ marginTop: 2 }}><path d="M9 1V9H1Z" fill="#555" stroke="#222" strokeWidth="1.2" /></svg>
            <Chip $ml={13} $pr={9} $pl={4}>
              <Eye />
              <SelectedRoot>
                <svg width="18" height="18" viewBox="0 0 18 18">
                  <path d="M1 5L5 1H17L13 5Z" fill="#eef1f6" stroke="#666" strokeWidth="0.6" />
                  <rect x="1" y="5" width="12" height="12" fill="#cdd6e4" stroke="#666" strokeWidth="0.6" />
                  <path d="M13 5L17 1V13L13 17Z" fill="#eef1f6" stroke="#666" strokeWidth="0.6" />
                </svg>
                <ChipText $ml={19}>(Unsaved)</ChipText>
              </SelectedRoot>
              <svg width="18" height="18" viewBox="0 0 18 18" style={{ marginLeft: 6 }}>
                <circle cx="9" cy="9" r="8.2" fill="#e8e8e8" stroke="#8a8a8a" />
                <circle cx="9" cy="9" r="3.5" fill="#444" />
              </svg>
            </Chip>
          </TreeRow>
          <TreeRow $indent={24}>
            <Toggle />
            <Chip $ml={13} $pr={16}><FaCog size={18} color="#757575" /><ChipText $ml={17}>Document Settings</ChipText></Chip>
          </TreeRow>
          <TreeRow $indent={24}>
            <Toggle />
            <Chip $ml={13} $pr={13}><FolderIcon /><ChipText $ml={18}>Named Views</ChipText></Chip>
          </TreeRow>
          <TreeRow $indent={24}>
            <Toggle />
            <Chip $ml={13} $pr={16} $pl={5}><FaRegEyeSlash size={21} color="#9a9a9a" /><ChipText $ml={11}><FolderIcon /></ChipText><ChipText $ml={19}>Origin</ChipText></Chip>
          </TreeRow>
          <TreeRow $indent={24}>
            <Toggle />
            <Chip $ml={13} $pr={14} $pl={5}>
              <FaEye size={21} color="#8a8a8a" /><ChipText $ml={11}><FolderIcon /></ChipText><ChipText $ml={19}>Sketches</ChipText>
              <Squiggle viewBox="0 0 117 5"><path d="M0 4L3 1L6 4L9 1L12 4L15 1L18 4L21 1L24 4L27 1L30 4L33 1L36 4L39 1L42 4L45 1L48 4L51 1L54 4L57 1L60 4L63 1L66 4L69 1L72 4L75 1L78 4L81 1L84 4L87 1L90 4L93 1L96 4L99 1L102 4L105 1L108 4L111 1L114 4L117 1" fill="none" stroke="#5b80b4" strokeWidth="1.6" strokeDasharray="4 2" /></Squiggle>
            </Chip>
          </TreeRow>
        </Tree>

        <Dialog>
          <DialogHeader>
            <FaMinusCircle size={12} color="#333" />
            <PanelTitle $ml={0}>SPHERE</PanelTitle>
            <svg width="13" height="8" viewBox="0 0 13 8"><path d="M0 0V8L6 4ZM7 0V8L13 4Z" fill="#333" /></svg>
          </DialogHeader>
          <DialogBody>
            <span>Point</span>
            <PlaneRow>
              <PlaneButton>
                <svg width="12" height="19" viewBox="0 0 12 19"><path d="M1 1V16L4.5 13L7 18.5L10 17L7.5 11.5L12 11Z" fill="#ddd" stroke="#444" /></svg>
                Plane
              </PlaneButton>
              <svg width="12" height="12" viewBox="0 0 12 12"><path d="M1 1L11 11M11 1L1 11" stroke="#555" strokeWidth="2.2" /></svg>
            </PlaneRow>
            <span>Diameter</span>
            <ValueField><Marked $c="#ffbcdc">40.00 mm</Marked></ValueField>
            <span>Operation</span>
            <SelectField>
              <svg width="20" height="22" viewBox="0 0 20 22">
                <path d="M1 6C1 4 14 4 14 6V19C14 21 1 21 1 19Z" fill="#e2e2e2" stroke="#666" />
                <ellipse cx="7.5" cy="6" rx="6.5" ry="2.4" fill="#f4f4f4" stroke="#666" />
                <Star x={14} y={5} r={5.5} />
              </svg>
              <span style={{ flex: 1 }}>New Body</span>
              <Caret $c="#333" />
            </SelectField>
          </DialogBody>
          <DialogFooter>
            <FaInfoCircle size={16} color="#111" />
            <PrimaryButton>OK</PrimaryButton>
            <CancelButton>Cancel</CancelButton>
          </DialogFooter>
        </Dialog>

        <DimBox>
          <Grip />
          <DimInput><Marked $c="#cccccc" $pad={1}>40.00 mm</Marked></DimInput>
          <KebabDots><Dot /><Dot /><Dot /></KebabDots>
        </DimBox>

        <NavBar>
          <NavItem $ml={5}>
            <NavSvg $w={20} viewBox="0 0 20 22" fill="none" stroke="#555">
              <path d="M10 1L14 6H12V20H8V6H6Z" fill="#f6f6f6" />
              <path d="M1 11H19M1 11L4 8M1 11L4 14M19 11L16 8M19 11L16 14" />
              <path d="M3 13C3 16 17 16 17 13" />
            </NavSvg>
          </NavItem>
          <NavItem $ml={7}><Caret $c="#222" /></NavItem>
          <NavItem $ml={10}>
            <NavSvg $w={19} viewBox="0 0 19 22" fill="none" stroke="#666">
              <path d="M2 6L10 2L11 5M12 4L18 2.5V7" />
              <rect x="0.7" y="7" width="17.6" height="13" fill="#ddd" />
              <path d="M3 11H16V15H3Z" fill="#bbb" />
            </NavSvg>
          </NavItem>
          <NavItem $ml={15}><FaRegHandPaper size={21} color="#555" /></NavItem>
          <NavItem $ml={13}>
            <NavSvg $w={22} viewBox="0 0 22 22" fill="none">
              <circle cx="8.5" cy="9" r="7" fill="#e4f2f5" stroke="#666" strokeWidth="1.3" />
              <path d="M14 14.5L20 20.5" stroke="#333" strokeWidth="3" />
              <path d="M17 1V6M14.5 3.5H19.5" stroke="#555" strokeWidth="1.2" />
            </NavSvg>
          </NavItem>
          <NavItem $ml={13}>
            <NavSvg $w={21} viewBox="0 0 21 22" fill="none">
              <rect x="0.7" y="1" width="19" height="20" stroke="#999" strokeDasharray="3 2" />
              <circle cx="9" cy="9" r="7" fill="#e4f2f5" stroke="#666" strokeWidth="1.3" />
              <path d="M14 14.5L20 20.5" stroke="#333" strokeWidth="3" />
            </NavSvg>
          </NavItem>
          <NavItem $ml={7}><Caret $c="#222" /></NavItem>
          <NavItem $ml={8}>
            <NavSvg $w={21} viewBox="0 0 21 22">
              <rect x="0.7" y="1" width="19.6" height="15" fill="#8fbce8" stroke="#666" strokeWidth="1.3" />
              <path d="M8 16V19H5V21H16V19H13V16Z" fill="#999" />
            </NavSvg>
          </NavItem>
          <NavItem $ml={3}><Caret $c="#222" /></NavItem>
          <NavItem $ml={10}>
            <NavSvg $w={19} viewBox="0 0 19 22" fill="none">
              <rect x="0" y="1" width="19" height="20" fill="#8d8d8d" />
              <path d="M0 4H19M0 7H19M0 10H19M0 13H19M0 16H19M0 19H19M3 1V21M6 1V21M9 1V21M12 1V21M15 1V21" stroke="#e6e6e6" strokeWidth="0.8" />
            </NavSvg>
          </NavItem>
          <NavItem $ml={4}><Caret $c="#222" /></NavItem>
          <NavItem $ml={10}>
            <NavSvg $w={20} viewBox="0 0 20 22">
              <rect x="0" y="2" width="20" height="18" fill="#609fd8" />
              <path d="M10 2V20M0 11H20" stroke="#d9e9f5" strokeWidth="1.5" />
            </NavSvg>
          </NavItem>
          <NavItem $ml={4}><Caret $c="#222" /></NavItem>
        </NavBar>

        <FloatPanelBar $top={942} $h={33}>
          <PanelTitle $ml={22}>COMMENTS</PanelTitle>
          <FaPlusCircle size={12} color="#2b2b2b" />
        </FloatPanelBar>

        <StatusRow>
          <StatusText>Sketch Point | X: 0.00 Y: 0.00 Z: 0.00 mm</StatusText>
          <svg width="19" height="18" viewBox="0 0 19 18">
            <path d="M9.5 0A9 9 0 0 1 18.5 9V18H9.5A9 9 0 0 1 9.5 0Z" fill="#111" />
            <path d="M4 11C5 7 9 5 14 5.5L9 11Z" fill="#fff" />
          </svg>
        </StatusRow>
      </Canvas>

      <Timeline>
        <TimelineRule />
        <Transport>
          <TransportBtn $w={15} viewBox="0 0 15 20"><path d="M0 2H2V18H0ZM15 2V18L3 10Z" fill="#666" /></TransportBtn>
          <TransportBtn $w={17} $ml={18} viewBox="0 0 17 20"><path d="M11 2V18L0 10ZM13 6H17V14H13Z" fill="#666" /></TransportBtn>
          <TransportBtn $w={16} $ml={17} viewBox="0 0 16 20"><path d="M0 0V20L16 10Z" fill="#666" /></TransportBtn>
          <TransportBtn $w={17} $ml={16} viewBox="0 0 17 20"><path d="M6 2V18L17 10ZM0 6H4V14H0Z" fill="#666" /></TransportBtn>
          <TransportBtn $w={15} $ml={18} viewBox="0 0 15 20"><path d="M13 2H15V18H13ZM0 2V18L12 10Z" fill="#666" /></TransportBtn>
          <FeatureTile viewBox="0 0 42 46">
            <rect x="0" y="3" width="31" height="32" rx="3" fill="#0a9bdc" />
            <rect x="6" y="10" width="17" height="17" fill="none" stroke="#0f6f9e" strokeWidth="1.3" strokeDasharray="3 1" />
            <path d="M10 14V23C15 23 19 19 19 14Z" fill="none" stroke="#0f6f9e" strokeWidth="1.2" />
            <path d="M19 26L26 19L29 22L22 29L18 30Z" fill="#f5b700" />
            <circle cx="27" cy="20" r="2" fill="#e2231a" />
            <rect x="16" y="35" width="2.5" height="8" fill="#cfcfcf" />
            <path d="M24 0H40V7L33.5 14V43H30.5V14L24 7Z" fill="#666" />
          </FeatureTile>
          <GearWrap><FaCog size={21} /></GearWrap>
        </Transport>
      </Timeline>
    </Page>
  );
}
